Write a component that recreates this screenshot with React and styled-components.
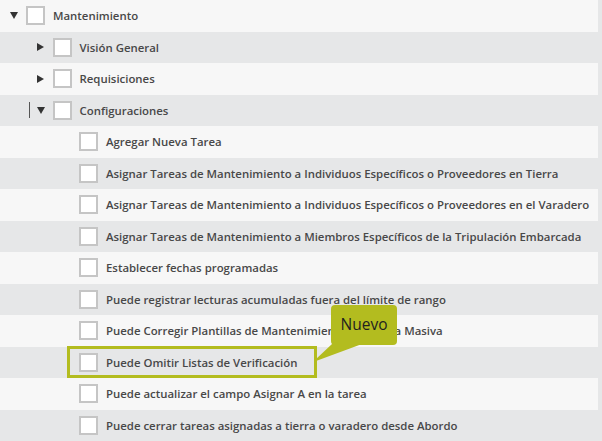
import React from "react";
import styled, { createGlobalStyle } from "styled-components";

const tree = [
  { level: 0, label: "Mantenimiento", toggle: "open" },
  { level: 1, label: "Visión General", toggle: "closed" },
  { level: 1, label: "Requisiciones", toggle: "closed" },
  { level: 1, label: "Configuraciones", toggle: "open", caret: true },
  { level: 2, label: "Agregar Nueva Tarea" },
  {
    level: 2,
    label:
      "Asignar Tareas de Mantenimiento a Individuos Específicos o Proveedores en Tierra",
  },
  {
    level: 2,
    label:
      "Asignar Tareas de Mantenimiento a Individuos Específicos o Proveedores en el Varadero",
  },
  {
    level: 2,
    label:
      "Asignar Tareas de Mantenimiento a Miembros Específicos de la Tripulación Embarcada",
  },
  { level: 2, label: "Establecer fechas programadas" },
  { level: 2, label: "Puede registrar lecturas acumuladas fuera del límite de rango" },
  { level: 2, label: "Puede Corregir Plantillas de Mantenimiento de Forma Masiva" },
  { level: 2, label: "Puede Omitir Listas de Verificación", isNew: true },
  { level: 2, label: "Puede actualizar el campo Asignar A en la tarea" },
  { level: 2, label: "Puede cerrar tareas asignadas a tierra o varadero desde Abordo" },
];

const App = () => {
  return (
    <>
      <GlobalStyle />
      <Tree>
        {tree.map((node, i) => {
          const content = (
            <>
              <Check />
              <Label>{node.label}</Label>
            </>
          );
          return (
            <Row key={i} $odd={i % 2 === 1} $level={node.level}>
              <Toggle>
                {node.caret && <Caret />}
                {node.toggle === "open" && <ArrowDown />}
                {node.toggle === "closed" && <ArrowRight />}
              </Toggle>
              {node.isNew ? <Highlight>{content}</Highlight> : content}
            </Row>
          );
        })}
        <Callout>
          Nuevo
          <Tail width="50" height="20" viewBox="0 0 50 20">
            <polygon points="17,0 47,0 1,17 0,16" fill="#b3bc1f" />
          </Tail>
        </Callout>
      </Tree>
    </>
  );
};

export default App;

const GlobalStyle = createGlobalStyle`
  html, body {
    margin: 0;
    padding: 0;
    background: #e6e7e8;
  }
  body {
    font-family: "Open Sans", "Liberation Sans", sans-serif;
  }
`;

const Tree = styled.div`
  position: relative;
  width: 602px;
  height: 441px;
  overflow: hidden;
`;

const Row = styled.div`
  display: flex;
  align-items: center;
  box-sizing: border-box;
  width: 598px;
  height: 31.5px;
  padding-left: ${(p) => 10 + p.$level * 26.5}px;
  background: ${(p) => (p.$odd ? "#e6e7e8" : "#f7f7f7")};
`;

const Toggle = styled.div`
  position: relative;
  width: 16px;
  height: 16px;
  flex-shrink: 0;
  display: flex;
  align-items: center;
`;

const ArrowDown = styled.span`
  width: 0;
  height: 0;
  border-left: 4px solid transparent;
  border-right: 4px solid transparent;
  border-top: 7px solid #333;
`;

const ArrowRight = styled.span`
  width: 0;
  height: 0;
  border-top: 4px solid transparent;
  border-bottom: 4px solid transparent;
  border-left: 7px solid #333;
`;

const Caret = styled.span`
  position: absolute;
  left: -8px;
  top: 0;
  width: 1.5px;
  height: 16px;
  background: #555;
`;

const Check = styled.span`
  flex-shrink: 0;
  box-sizing: border-box;
  width: 19px;
  height: 19px;
  background: #fff;
  border: 2.5px solid #c5c5c5;
  margin-right: 8px;
`;

const Label = styled.span`
  font-size: 11.4px;
  font-weight: 600;
  color: #484848;
  white-space: nowrap;
`;

const Highlight = styled.span`
  display: inline-flex;
  align-items: center;
  box-sizing: border-box;
  height: 32px;
  margin-left: -12px;
  padding: 0 17px 0 9px;
  border: 3px solid #b3bc1f;
`;

const Callout = styled.div`
  position: absolute;
  left: 331px;
  top: 305px;
  width: 66px;
  height: 40px;
  box-sizing: border-box;
  border-radius: 4px;
  background: #b3bc1f;
  color: #1f1f1f;
  font-size: 15.5px;
  display: flex;
  align-items: center;
  justify-content: center;
  padding-bottom: 2px;
`;

const Tail = styled.svg`
  position: absolute;
  left: -16px;
  top: 39px;
`;
